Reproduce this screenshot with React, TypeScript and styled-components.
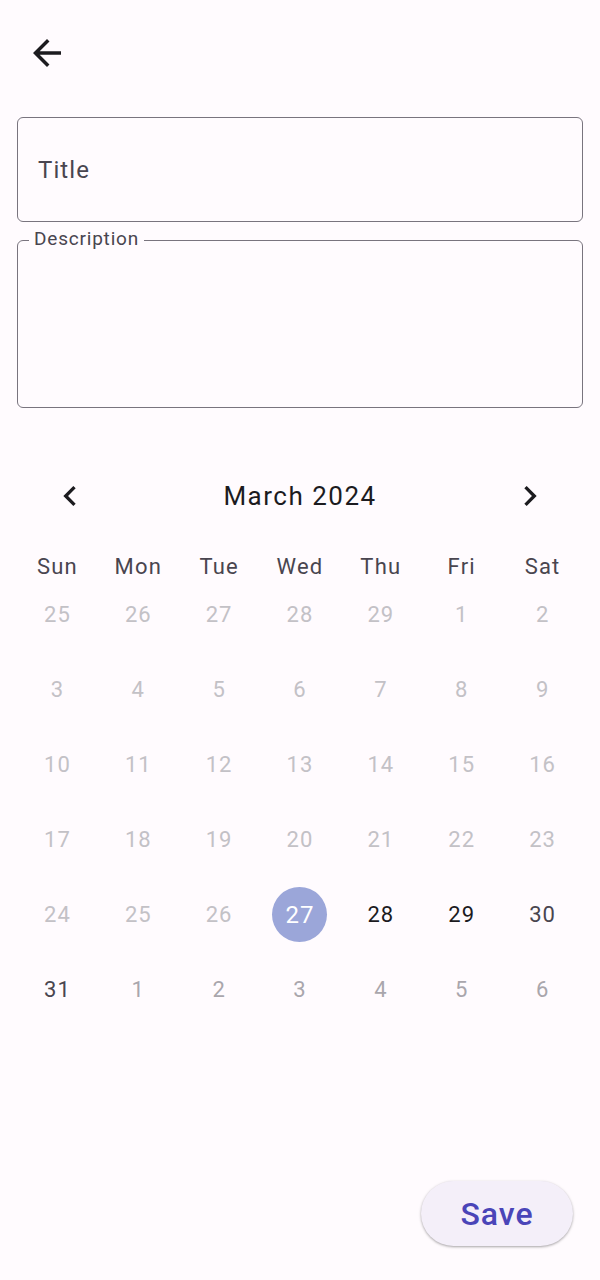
import React from "react";
import styled, { createGlobalStyle } from "styled-components";

const Global = createGlobalStyle`
  html, body { margin: 0; padding: 0; background: #fffbfe; }
  body { font-family: Roboto, "Noto Sans", sans-serif; }
  * { box-sizing: border-box; }
`;

const Page = styled.div`
  height: 1280px;
  display: flex;
  flex-direction: column;
  padding: 0 17px;
`;

const TopBar = styled.div`
  height: 117px;
  display: flex;
  align-items: flex-start;
  padding-top: 32px;
  padding-left: 9px;
`;

const IconButton = styled.button`
  border: none;
  background: transparent;
  padding: 0;
  width: 42px;
  height: 42px;
  display: flex;
  align-items: center;
  justify-content: center;
  color: #1c1b1f;
`;

const Field = styled.div<{ $h: number }>`
  position: relative;
  height: ${(p) => p.$h}px;
  border: 1.5px solid #79747e;
  border-radius: 6px;
  display: flex;
  align-items: center;
  padding-left: 20px;
`;

const Placeholder = styled.span`
  font-size: 24px;
  color: #49454f;
  letter-spacing: 1.1px;
`;

const FloatingLabel = styled.span`
  position: absolute;
  left: 11px;
  top: -13px;
  padding: 0 5px;
  background: #fffbfe;
  font-size: 19px;
  line-height: 22px;
  color: #49454f;
  letter-spacing: 0.8px;
`;

const Gap = styled.div<{ $h: number }>`
  height: ${(p) => p.$h}px;
  flex-shrink: 0;
`;

const CalHeader = styled.div`
  height: 56px;
  display: flex;
  align-items: center;
  justify-content: space-between;
  padding: 0 33px;
`;

const MonthTitle = styled.div`
  font-size: 26px;
  letter-spacing: 1.5px;
  color: #1c1b1f;
`;

const Chevron = styled.button`
  border: none;
  background: transparent;
  padding: 0;
  width: 40px;
  height: 40px;
  display: flex;
  align-items: center;
  justify-content: center;
  color: #1c1b1f;
`;

const Grid = styled.div`
  display: grid;
  grid-template-columns: repeat(7, 1fr);
`;

const WeekdayCell = styled.div`
  height: 20px;
  line-height: 20px;
  text-align: center;
  font-size: 22px;
  letter-spacing: 1.2px;
  color: #49454f;
`;

type Tone = "past" | "today" | "future" | "weekend" | "other";

const toneColor: Record<Tone, string> = {
  past: "#c3c1c6",
  today: "#ffffff",
  future: "#1c1b1f",
  weekend: "#49454f",
  other: "#a9a6ac",
};

const DayCell = styled.div`
  height: 75px;
  display: flex;
  align-items: center;
  justify-content: center;
`;

const DayNum = styled.div<{ $tone: Tone }>`
  width: 55px;
  height: 55px;
  border-radius: 50%;
  display: flex;
  align-items: center;
  justify-content: center;
  letter-spacing: 1px;
  color: ${(p) => toneColor[p.$tone]};
  background: ${(p) => (p.$tone === "today" ? "#9ba6d9" : "transparent")};
  font-size: ${(p) => (p.$tone === "today" ? "24px" : "22px")};
`;

const Footer = styled.div`
  margin-top: auto;
  display: flex;
  justify-content: flex-end;
  padding-right: 10px;
  padding-bottom: 34px;
`;

const SaveButton = styled.button`
  width: 152px;
  height: 65px;
  border: none;
  border-radius: 33px;
  background: #f4eff9;
  box-shadow: 0 1px 3px rgba(0, 0, 0, 0.25), 0 1px 2px rgba(0, 0, 0, 0.12);
  font-family: Roboto, sans-serif;
  font-size: 32px;
  font-weight: 500;
  letter-spacing: 1px;
  color: #4a45b8;
`;

const weekdays = ["Sun", "Mon", "Tue", "Wed", "Thu", "Fri", "Sat"];

const days: { n: number; tone: Tone }[] = [];
[25, 26, 27, 28, 29].forEach((n) => days.push({ n, tone: "past" }));
for (let n = 1; n <= 26; n++) days.push({ n, tone: "past" });
days.push({ n: 27, tone: "today" });
days.push({ n: 28, tone: "future" });
days.push({ n: 29, tone: "future" });
days.push({ n: 30, tone: "weekend" });
days.push({ n: 31, tone: "weekend" });
for (let n = 1; n <= 6; n++) days.push({ n, tone: "other" });

export default function App() {
  return (
    <>
      <Global />
      <Page>
        <TopBar>
          <IconButton aria-label="Back">
            <svg width="42" height="42" viewBox="0 0 24 24" fill="currentColor">
              <path d="M20 11H7.83l5.59-5.59L12 4l-8 8 8 8 1.41-1.41L7.83 13H20v-2z" />
            </svg>
          </IconButton>
        </TopBar>
        <Field $h={105}>
          <Placeholder>Title</Placeholder>
        </Field>
        <Gap $h={18} />
        <Field $h={168}>
          <FloatingLabel>Description</FloatingLabel>
        </Field>
        <Gap $h={60} />
        <CalHeader>
          <Chevron aria-label="Previous month">
            <svg width="40" height="40" viewBox="0 0 24 24" fill="currentColor">
              <path d="M15.41 7.41L14 6l-6 6 6 6 1.41-1.41L10.83 12z" />
            </svg>
          </Chevron>
          <MonthTitle>March 2024</MonthTitle>
          <Chevron aria-label="Next month">
            <svg width="40" height="40" viewBox="0 0 24 24" fill="currentColor">
              <path d="M10 6L8.59 7.41 13.17 12l-4.58 4.59L10 18l6-6z" />
            </svg>
          </Chevron>
        </CalHeader>
        <Gap $h={33} />
        <Grid>
          {weekdays.map((w) => (
            <WeekdayCell key={w}>{w}</WeekdayCell>
          ))}
        </Grid>
        <Grid>
          {days.map((d, i) => (
            <DayCell key={i}>
              <DayNum $tone={d.tone}>{d.n}</DayNum>
            </DayCell>
          ))}
        </Grid>
        <Footer>
          <SaveButton>Save</SaveButton>
        </Footer>
      </Page>
    </>
  );
}
